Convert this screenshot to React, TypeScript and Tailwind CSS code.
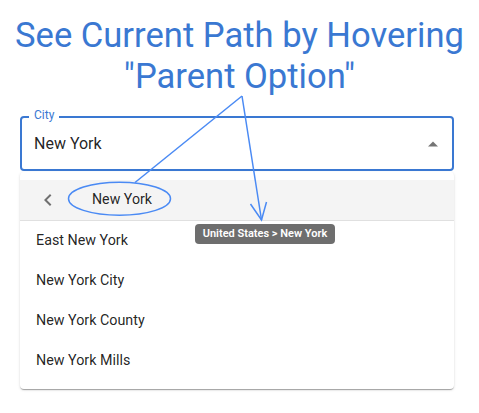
const items = ["East New York", "New York City", "New York County", "New York Mills"];

export default function App() {
  return (
    <div className="relative h-[413px] w-[479px] overflow-hidden bg-white font-['Roboto',sans-serif]">
      <h1 className="pt-[15px] text-center text-[34.6px] font-normal leading-[41px] text-[#3a78d2]">
        See Current Path by Hovering
        <br />
        "Parent Option"
      </h1>

      <div className="relative ml-[20px] mt-[19px] flex h-[55px] w-[434px] items-center rounded-[4px] border-2 border-[#3a78d2] pl-[12px] pr-[7px]">
        <span className="absolute -top-[9px] left-[7px] bg-white px-[5px] text-[12px] leading-[12px] text-[#3a78d2]">City</span>
        <span className="flex-1 text-[16px] leading-[23px] text-black/[0.87]">New York</span>
        <svg width="24" height="24" viewBox="0 0 24 24" className="fill-black/[0.54]">
          <path d="M7 14.5l5-5 5 5z" />
        </svg>
      </div>

      <div className="ml-[20px] mt-[1px] w-[434px] rounded-[4px] bg-white py-[8px] shadow-[0_2px_1px_-1px_rgba(0,0,0,0.2),0_1px_1px_0_rgba(0,0,0,0.14),0_1px_3px_0_rgba(0,0,0,0.12)]">
        <div className="flex h-[41px] items-center border-b border-[#e0e0e0] bg-[#f4f4f4] pl-[16px]">
          <svg width="24" height="24" viewBox="0 0 24 24" className="fill-black/[0.54]">
            <path d="M15.41 7.41 14 6l-6 6 6 6 1.41-1.41L10.83 12z" />
          </svg>
          <span className="ml-[32px] text-[14.2px] text-black/[0.87]">New York</span>
        </div>
        {items.map((item) => (
          <div key={item} className="flex h-[40px] items-center px-[16px] text-[14.3px] text-black/[0.87]">
            {item}
          </div>
        ))}
      </div>

      <div className="absolute left-[195px] top-[224px] flex h-[20px] w-[140px] items-center justify-center rounded-[4px] bg-[#6e6e6e] text-[11px] font-semibold text-white">
        United States &gt; New York
      </div>

      <svg className="pointer-events-none absolute inset-0" width="479" height="413" fill="none" stroke="#4a8af4" strokeWidth="1.5">
        <ellipse cx="119.5" cy="198.7" rx="51" ry="16.5" />
        <line x1="242" y1="96" x2="135" y2="182.5" />
        <line x1="242" y1="96" x2="261.5" y2="220" />
        <polyline points="250.5,204 261.5,220 266.5,202" />
      </svg>
    </div>
  );
}
